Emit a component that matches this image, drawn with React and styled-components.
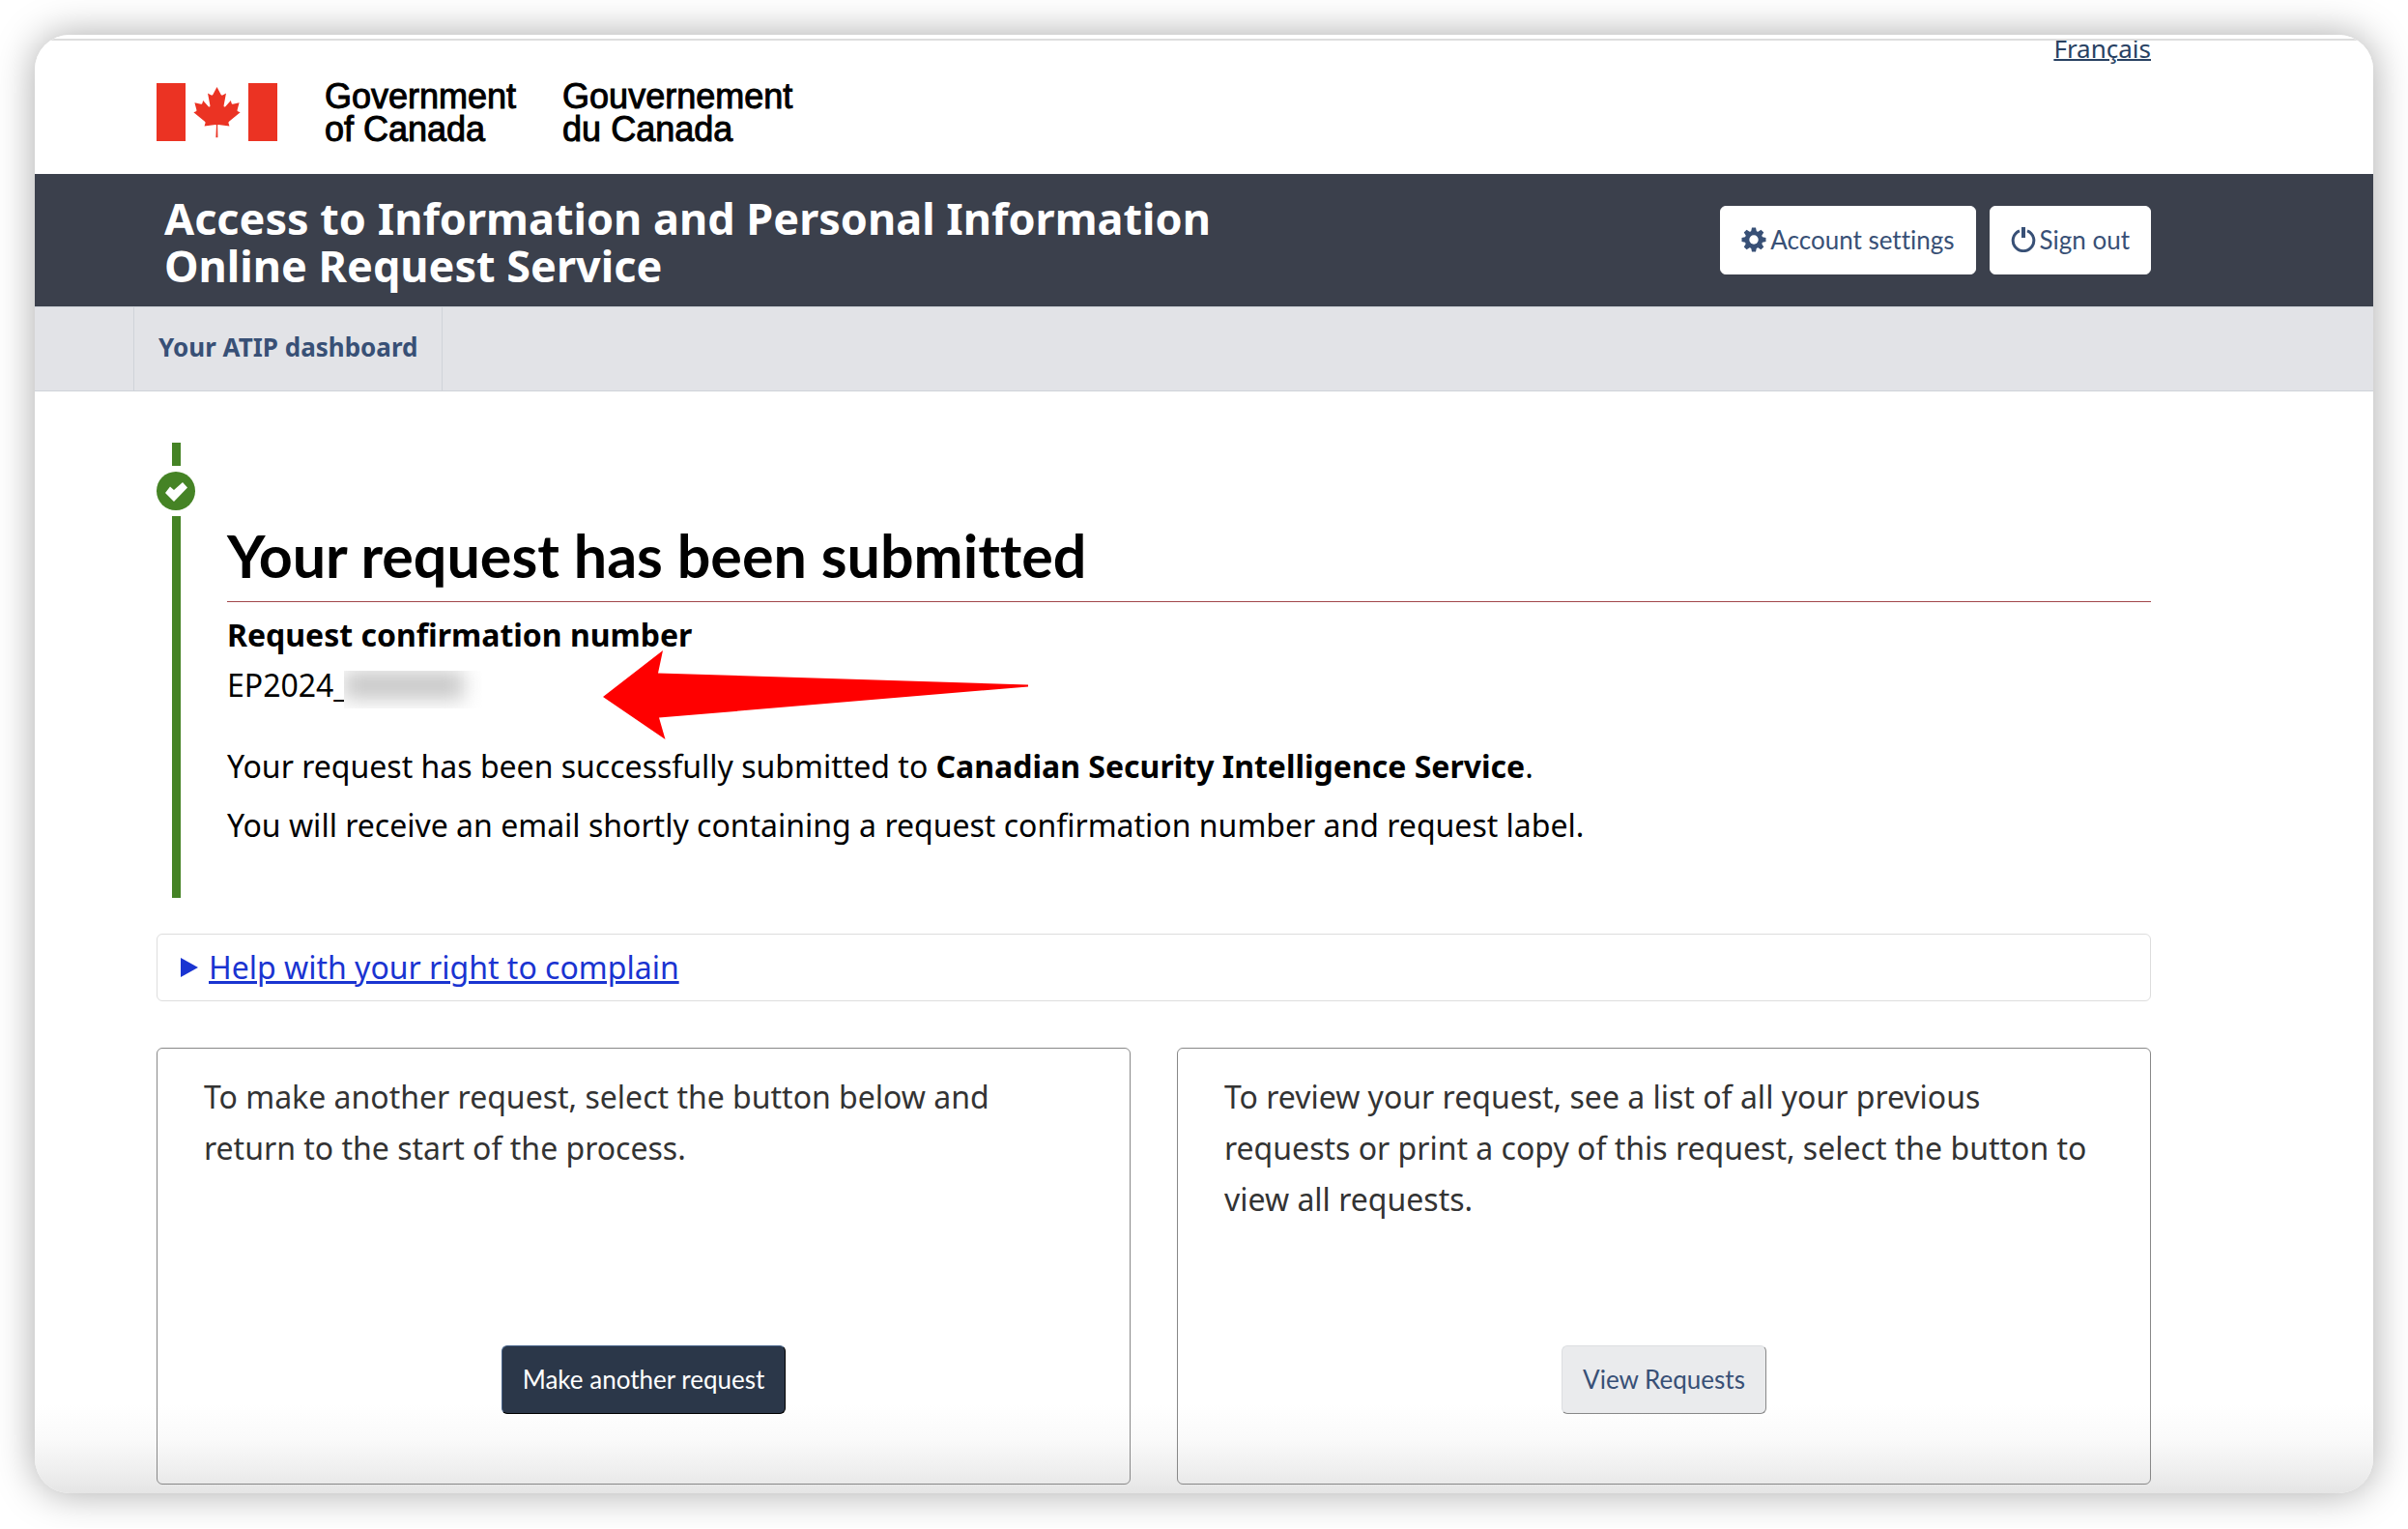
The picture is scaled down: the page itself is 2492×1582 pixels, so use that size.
import React from 'react';
import styled, { createGlobalStyle, css } from 'styled-components';

const sans = '"Noto Sans", "Open Sans", sans-serif';
const lato = 'Lato, "Noto Sans", sans-serif';

const GlobalStyle = createGlobalStyle`
  *, *::before, *::after { box-sizing: border-box; }
  body { margin: 0; padding: 36px; background: #fff; color: #000; font-family: ${sans}; font-size: 32px; }
  h1, h2, p { margin: 0; }
`;

const Window = styled.div`
  overflow: hidden;
  border-radius: 36px;
  padding-top: 4px;
  background: linear-gradient(to top, #e5e5e5 0, #efefef 24px, #fafafa 56px, #fff 92px);
  box-shadow: 0 0 40px rgba(0, 0, 0, 0.34);
`;

const gutters = css`
  padding-left: 126px;
  padding-right: 230px;
`;

const Masthead = styled.header`
  ${gutters}
  display: flex;
  justify-content: space-between;
  align-items: flex-start;
  height: 140px;
  border-top: 2px solid #ddd;
  overflow: hidden;
`;

const Brand = styled.div`
  display: flex;
  align-items: flex-start;
  padding-top: 44px;
`;

const Flag = styled.svg`
  width: 125px;
  height: 60px;
  margin-right: 49px;
`;

const Wordmark = styled.div`
  margin-right: 48px;
  margin-top: -3px;
  font: 36px/34px "Liberation Sans", Arial, sans-serif;
  -webkit-text-stroke: 1px #000;
`;

const LanguageLink = styled.a`
  color: #284162;
  font-size: 26px;
  line-height: 36px;
  text-decoration-thickness: 2px;
  margin-top: -10px;
`;

const TitleBar = styled.div`
  ${gutters}
  display: flex;
  justify-content: space-between;
  align-items: center;
  min-height: 137px;
  background: #3b404c;
`;

const AppTitle = styled.h2`
  max-width: 1200px;
  padding: 3px 0 0 8px;
  color: #fff;
  font-size: 45px;
  line-height: 49px;
`;

const Actions = styled.div`
  display: flex;
  gap: 14px;
`;

const tones = {
  plain: css`background: #fff; border-color: #fff; color: #385076;`,
  dark: css`background: #2b3749; border-color: #466288 #000 #000 #466288; color: #fff;`,
  light: css`background: #eaebed; border-color: #dcdee1 #888 #888 #dcdee1; color: #385076;`,
};

const Button = styled.button`
  display: flex;
  align-items: center;
  gap: 4px;
  height: 71px;
  padding: 0 21px 2px;
  border: 1px solid;
  border-radius: 6px;
  font: 26px/38px ${lato};
  font-variant-ligatures: none;
  ${(p) => tones[p.$tone]}
`;

const ButtonIcon = styled.svg`
  width: 26px;
  height: 26px;
`;

const Nav = styled.nav`
  display: flex;
  padding-left: 102px;
  background: #e2e3e7;
  border-top: 1px solid #cfd3d9;
  border-bottom: 1px solid #cfd3d9;
`;

const NavLink = styled.a`
  padding: 23px 25px 27px;
  border: solid #cfd3d9;
  border-width: 0 1px;
  color: #385076;
  font-size: 26px;
  font-weight: 700;
  line-height: 36px;
  text-decoration: none;
`;

const Main = styled.main`
  ${gutters}
  padding-top: 53px;
  padding-bottom: 9px;
`;

const Status = styled.section`
  display: flex;
  gap: 33px;
`;

const Track = styled.div`
  display: flex;
  flex-direction: column;
  align-items: center;
  gap: 6px;
  width: 40px;
`;

const Rail = styled.span`
  width: 9px;
  background: #458325;
  ${(p) => (p.$fill ? 'flex: 1;' : 'height: 24px;')}
`;

const StatusBadge = styled.svg`
  width: 40px;
  height: 40px;
`;

const StatusBody = styled.div`
  flex: 1;
  padding: 80px 0 49px;
`;

const PageTitle = styled.h1`
  padding-bottom: 10px;
  border-bottom: 1px solid #a2474b;
  font: 700 61px/74px ${lato};
  font-variant-ligatures: none;
`;

const Label = styled.p`
  margin-top: 8px;
  font-weight: 700;
  line-height: 52px;
`;

const Confirmation = styled.div`
  position: relative;
  display: flex;
  align-items: center;
  line-height: 52px;
`;

const Redaction = styled.span`
  width: 143px;
  height: 39px;
  margin: 9px 0 0 -4px;
  overflow: hidden;
  background: #fff;
  &::before {
    content: '';
    display: block;
    width: 124px;
    height: 30px;
    background: #c9c9c9;
    filter: blur(10px);
  }
`;

const Arrow = styled.svg`
  position: absolute;
  left: 389px;
  top: -10px;
  width: 442px;
  height: 94px;
`;

const Note = styled.p`
  margin-top: ${(p) => (p.$first ? 32 : 9)}px;
  line-height: 52px;
`;

const Help = styled.details`
  margin-top: 37px;
  border: 1px solid #ddd;
  border-radius: 6px;
  color: #1a34d1;
`;

const HelpSummary = styled.summary`
  display: flex;
  align-items: center;
  gap: 11px;
  padding: 8px 24px;
  line-height: 52px;
  list-style: none;
  cursor: pointer;
  text-decoration: underline;
  text-decoration-thickness: 3px;
  &::before {
    content: '';
    border-left: 18px solid;
    border-top: 10px solid transparent;
    border-bottom: 10px solid transparent;
  }
`;

const Cards = styled.div`
  display: grid;
  grid-template-columns: 1fr 1fr;
  gap: 48px;
  margin-top: 48px;
`;

const Card = styled.section`
  display: flex;
  flex-direction: column;
  align-items: center;
  justify-content: space-between;
  min-height: 452px;
  padding: 23px 48px 72px;
  border: 1px solid #888;
  border-radius: 6px;
`;

const CardText = styled.p`
  width: 100%;
  color: #333;
  line-height: 53px;
`;

export default function App() {
  return (
    <>
      <GlobalStyle />
      <Window>
        <Masthead>
          <Brand>
            <Flag viewBox="0 0 125 60" role="img" aria-label="Canada">
              <path fill="#eb3323" d="M0 0h30v60H0zM95 0h30v60H95z" />
              <path
                fill="#eb3323"
                transform="translate(5 0.3) scale(0.92)"
                d="M62.500 4l-4.600 8.600c-.5.9-1.400.8-2.300.3l-3.400-1.700 2.500 13.200c.5 2.400-1.200 2.400-2 1.400l-5.800-6.500-.9 3.300c-.1.400-.6.900-1.300.8l-7.300-1.600 1.900 7c.4 1.600.7 2.200-.4 2.600l-2.600 1.200 12.600 10.200c.5.400.8 1.100.6 1.700l-1.100 3.600c4.300-.5 8.200-1.200 12.500-1.700.4 0 1 .6 1 1l-.6 13.400h2.200l-.3-13.400c0-.4.500-1 .9-1 4.300.5 8.200 1.200 12.500 1.700l-1.100-3.600c-.2-.6.100-1.300.6-1.700l12.600-10.200-2.600-1.200c-1.100-.4-.8-1-.4-2.600l1.900-7-7.300 1.600c-.7.1-1.200-.4-1.300-.8l-.9-3.300-5.800 6.500c-.8 1-2.500 1-2-1.400l2.500-13.200-3.400 1.700c-.9.500-1.800.6-2.300-.3z"
              />
            </Flag>
            <Wordmark>Government<br />of Canada</Wordmark>
            <Wordmark lang="fr">Gouvernement<br />du Canada</Wordmark>
          </Brand>
          <LanguageLink href="#fr" lang="fr">Français</LanguageLink>
        </Masthead>
        <TitleBar>
          <AppTitle>Access to Information and Personal Information Online Request Service</AppTitle>
          <Actions>
            <Button type="button" $tone="plain">
              <ButtonIcon viewBox="-13 -13 26 26" aria-hidden="true">
                <g fill="#385076">
                  {[0, 45, 90, 135].map((a) => (
                    <path key={a} transform={`rotate(${a})`} d="M-3-8l1-4.500h4L3-8V8L2 12.500h-4L-3 8z" />
                  ))}
                  <circle r="9.300" />
                </g>
                <circle r="4.700" fill="#fff" />
              </ButtonIcon>
              Account settings
            </Button>
            <Button type="button" $tone="plain">
              <ButtonIcon viewBox="0 0 26 26" aria-hidden="true" fill="none" stroke="#385076">
                <path strokeWidth="3" d="M9 3.800a10.800 10.800 0 1 0 8 0" />
                <path strokeWidth="4" d="M13 0v11" />
              </ButtonIcon>
              Sign out
            </Button>
          </Actions>
        </TitleBar>
        <Nav>
          <NavLink href="#dashboard">Your ATIP dashboard</NavLink>
        </Nav>
        <Main>
          <Status>
            <Track>
              <Rail />
              <StatusBadge viewBox="0 0 40 40" aria-hidden="true">
                <circle cx="20" cy="20" r="20" fill="#458325" />
                <path fill="#fff" d="M9 22l5-6.500 4 3.500 9-8 5 5.500L18 31z" />
              </StatusBadge>
              <Rail $fill />
            </Track>
            <StatusBody>
              <PageTitle>Your request has been submitted</PageTitle>
              <Label>Request confirmation number</Label>
              <Confirmation>
                EP2024_
                <Redaction />
                <Arrow viewBox="0 0 442 94" aria-hidden="true">
                  <path fill="#f00" d="M0 48L62 0l-5 23.500L440 35.500v2L58 69.500 64.500 92z" />
                </Arrow>
              </Confirmation>
              <Note $first>
                Your request has been successfully submitted to <b>Canadian Security Intelligence Service</b>.
              </Note>
              <Note>
                You will receive an email shortly containing a request confirmation number and request label.
              </Note>
            </StatusBody>
          </Status>
          <Help>
            <HelpSummary>Help with your right to complain</HelpSummary>
          </Help>
          <Cards>
            <Card>
              <CardText>
                To make another request, select the button below and return to the start of the process.
              </CardText>
              <Button type="button" $tone="dark">Make another request</Button>
            </Card>
            <Card>
              <CardText>
                To review your request, see a list of all your previous requests or print a copy of this
                request, select the button to view all requests.
              </CardText>
              <Button type="button" $tone="light">View Requests</Button>
            </Card>
          </Cards>
        </Main>
      </Window>
    </>
  );
}
